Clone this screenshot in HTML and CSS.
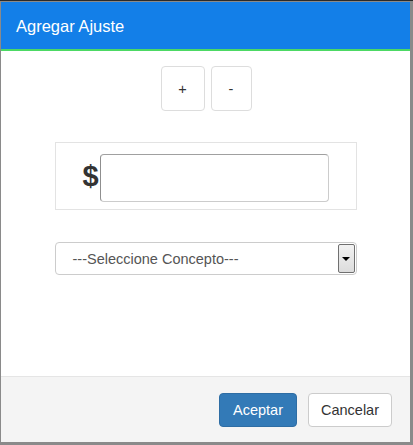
FILE: index.html
```html
<!DOCTYPE html>
<html>
<head>
<meta charset="utf-8">
<link rel="stylesheet" href="styles.css">
</head>
<body>
<div class="frame">
  <div class="modal">
    <div class="modal-header">
      <h4 class="title">Agregar Ajuste</h4>
    </div>
    <div class="modal-body">
      <div class="sign-group">
        <button class="btn sign plus">+</button>
        <button class="btn sign minus">-</button>
      </div>
      <div class="amount-box">
        <span class="dollar">$</span>
        <input class="amount-input" type="text">
      </div>
      <div class="select">
        <span class="select-text">---Seleccione Concepto---</span>
        <span class="select-arrow"><span class="tri"></span></span>
      </div>
    </div>
    <div class="modal-footer">
      <button class="btn btn-primary">Aceptar</button>
      <button class="btn btn-default">Cancelar</button>
    </div>
  </div>
</div>
</body>
</html>
```

FILE: styles.css
```css
html, body {
  margin: 0;
  padding: 0;
  background: #fff;
  font-family: "Liberation Sans", Arial, sans-serif;
}
.frame {
  width: 413px;
  height: 445px;
  box-sizing: border-box;
  background: #8a8a8a;
  border-top: 1px solid #2a2a2a;
  padding: 1px 3px 3px 1px;
}
.modal {
  height: 100%;
  background: #fff;
  display: flex;
  flex-direction: column;
}
.modal-header {
  height: 47px;
  background: #137fe8;
  border-bottom: 2px solid #4cd964;
  display: flex;
  align-items: center;
  padding-left: 15px;
}
.title {
  margin: 0;
  font-weight: normal;
  font-size: 16.5px;
  color: #fff;
  padding-top: 2px;
}
.modal-body {
  flex: 1;
  display: flex;
  flex-direction: column;
  align-items: center;
  padding-top: 15px;
}
.sign-group {
  display: flex;
  gap: 6px;
  margin-left: 1px;
}
.btn {
  font-family: "Liberation Sans", Arial, sans-serif;
  font-size: 14.5px;
  border-radius: 4px;
  border: 1px solid #ccc;
  background: #fff;
  color: #333;
  cursor: pointer;
  padding: 0;
}
.sign {
  height: 45px;
  border-color: #ddd;
}
.plus { width: 44px; }
.minus { width: 41px; }
.amount-box {
  margin-top: 31px;
  width: 302px;
  height: 68px;
  box-sizing: border-box;
  border: 1px solid #e3e3e3;
  display: flex;
  align-items: center;
  padding-left: 27px;
}
.dollar {
  font-size: 29px;
  font-weight: bold;
  color: #333;
  line-height: 1;
  margin-right: 1px;
}
.amount-input {
  width: 229px;
  height: 48px;
  box-sizing: border-box;
  border: 1px solid #ccc;
  border-left-color: #8f8f8f;
  border-top-color: #a0a0a0;
  border-radius: 4px;
  margin: 0;
  padding: 0;
  outline: none;
  margin-top: 3px;
}
.select {
  margin-top: 32px;
  width: 302px;
  height: 33px;
  box-sizing: border-box;
  border: 1px solid #ccc;
  border-radius: 4px;
  display: flex;
  align-items: center;
  justify-content: space-between;
  padding-left: 17px;
  padding-right: 1px;
}
.select-text {
  font-size: 14.5px;
  color: #555;
}
.select-arrow {
  width: 17px;
  height: 29px;
  box-sizing: border-box;
  border: 1px solid #707070;
  border-radius: 2px;
  background: linear-gradient(#f2f2f2, #dcdcdc);
  display: flex;
  align-items: center;
  justify-content: center;
}
.tri {
  width: 0;
  height: 0;
  border-left: 4px solid transparent;
  border-right: 4px solid transparent;
  border-top: 4px solid #000;
}
.modal-footer {
  height: 66px;
  background: #f4f4f4;
  border-top: 1px solid #e5e5e5;
  display: flex;
  justify-content: flex-end;
  align-items: flex-start;
  gap: 11px;
  padding-top: 16px;
  padding-right: 18px;
  box-sizing: border-box;
}
.btn-primary {
  width: 78px;
  height: 34px;
  background: #337ab7;
  border-color: #2e6da4;
  color: #fff;
}
.btn-default {
  width: 84px;
  height: 34px;
  background: #fff;
  border-color: #ccc;
  color: #333;
}
```
